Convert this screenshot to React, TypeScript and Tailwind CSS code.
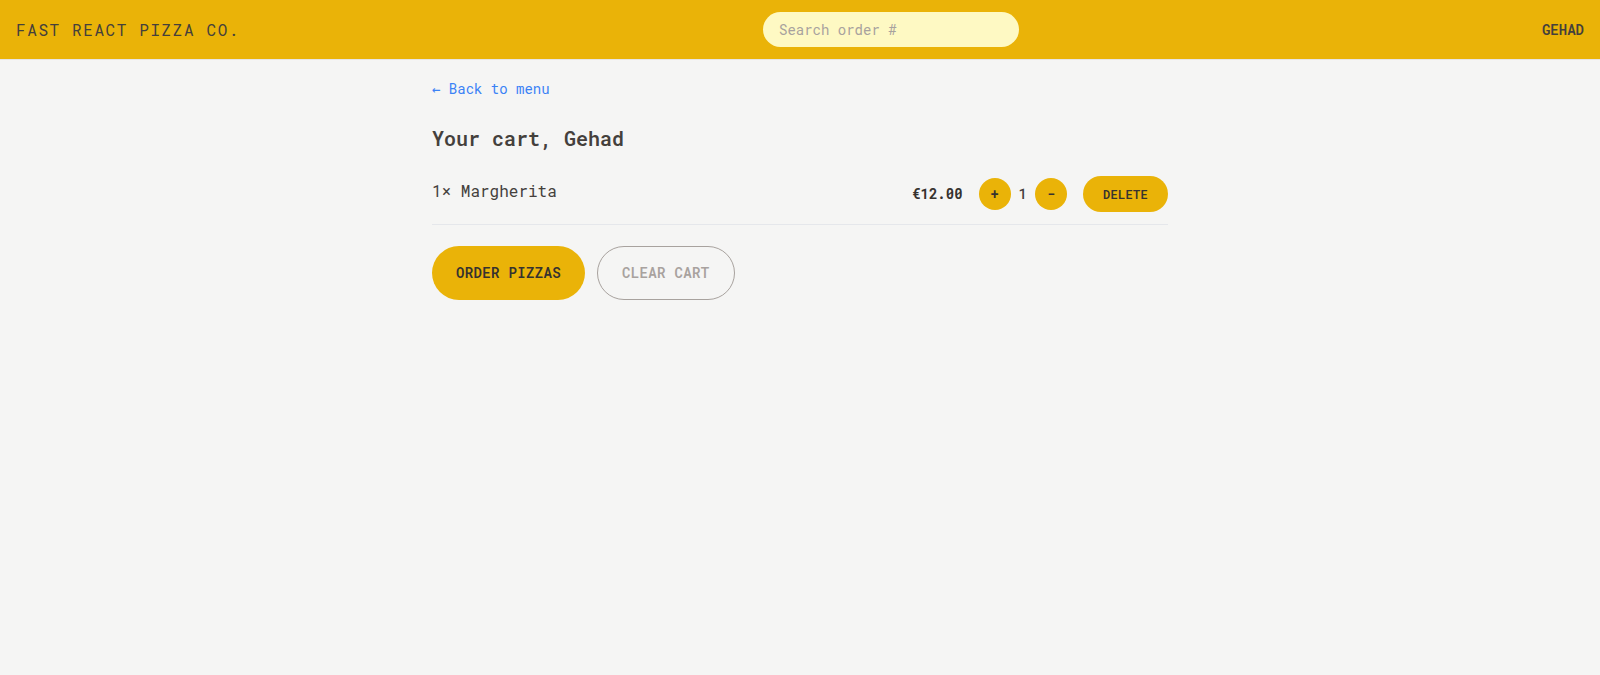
import React from "react";

const font = "font-['Roboto_Mono','DejaVu_Sans_Mono',monospace]";

export default function App() {
  return (
    <div className={`${font} min-h-screen bg-[#f5f5f4] text-[#44403c]`}>
      <header className="flex items-center justify-between border-b border-[#e7e5e4] bg-[#eab308] px-4 py-3 uppercase">
        <a className="text-base tracking-[0.1em] text-[#44403c]">Fast React Pizza Co.</a>
        <form>
          <input
            placeholder="Search order #"
            className={`${font} h-[35px] w-64 rounded-full bg-[#fef9c3] px-4 text-sm text-[#44403c] placeholder:text-[#a8a29e] outline-none`}
          />
        </form>
        <div className="text-sm font-semibold text-[#44403c]">Gehad</div>
      </header>

      <main className="mx-auto max-w-3xl px-4 pt-4">
        <a className="text-sm leading-5 text-[#3b82f6]">&larr; Back to menu</a>
        <h2 className="mt-6 text-xl font-semibold leading-7 text-[#44403c]">Your cart, Gehad</h2>

        <ul className="mt-3 border-b border-[#e5e7eb]">
          <li className="flex items-center justify-between py-3">
            <p className="-mt-[6px] text-base">1&times; Margherita</p>
            <div className="flex items-center gap-4">
              <p className="text-sm font-bold text-[#36322f]">€12.00</p>
              <div className="flex items-center gap-2">
                <button className="flex h-8 w-8 items-center justify-center rounded-full bg-[#eab308] text-sm font-semibold text-[#36322f]">
                  +
                </button>
                <span className="text-sm font-medium">1</span>
                <button className="flex h-8 w-8 items-center justify-center rounded-full bg-[#eab308] text-sm font-semibold text-[#36322f]">
                  -
                </button>
              </div>
              <button className="rounded-full bg-[#eab308] px-5 py-2.5 text-xs font-semibold uppercase leading-4 tracking-wide text-[#36322f]">
                Delete
              </button>
            </div>
          </li>
        </ul>

        <div className="mt-[21px] flex gap-3">
          <button className="rounded-full bg-[#eab308] px-6 py-4 text-sm font-semibold uppercase leading-5 tracking-wide text-[#36322f]">
            Order pizzas
          </button>
          <button className="rounded-full border border-[#a8a29e] px-6 py-4 text-sm font-semibold uppercase leading-5 tracking-wide text-[#a8a29e]">
            Clear cart
          </button>
        </div>
      </main>
    </div>
  );
}
